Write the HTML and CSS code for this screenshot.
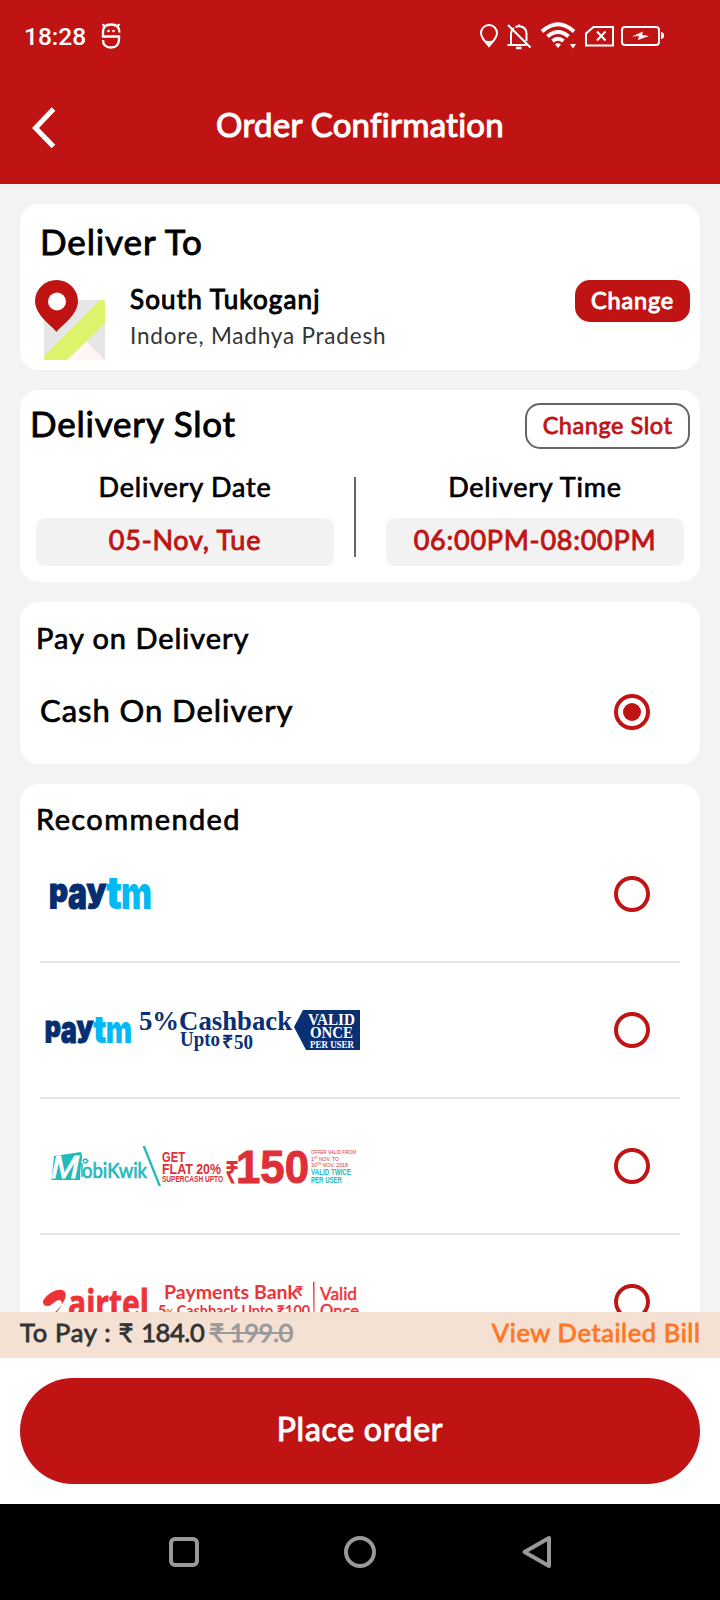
FILE: index.html
```html
<!DOCTYPE html>
<html lang="en">
<head>
<meta charset="utf-8">
<title>Order Confirmation</title>
<link rel="stylesheet" href="styles.css">
</head>
<body>
<div class="screen">
  <header class="header">
    <div class="status">
      <span class="clock">18:28</span>
      <svg class="face" width="20" height="28" viewBox="0 0 20 28" fill="none" stroke="#fff" stroke-width="2.300">
        <path d="M18.500 10.500C18.500 5 15 2.500 10 2.500S2 5 2 10v4.500h16V17c0 6-3 8.500-8 8.500S2 23 2 18M3.500 5 2 2M16.500 5 18 2"/>
        <circle cx="7.500" cy="9" r="1.300" fill="#fff" stroke="none"/><circle cx="12.500" cy="9" r="1.300" fill="#fff" stroke="none"/>
      </svg>
      <svg class="indicators" width="186" height="30" viewBox="0 0 186 30" fill="none" stroke="#fff" stroke-width="2">
        <path d="M9 24C6 20 1 16.500 1 11a8 8 0 0 1 16 0c0 5.500-5 9-8 13z"/>
        <path d="M2.500 17.500Q9 20.500 15.500 17.500L9 25z" fill="#fff" stroke="none"/>
        <path d="M28 3 50.500 25.500M27.500 23h19M31 22v-10q0-4 3-6M35.500 5q3-1.500 7 0 4 2 4 7v7M39 5V2.500"/>
        <path d="M36 26h5.500" stroke-width="2.500"/>
        <path d="M62 9.500Q78-5 94 9.500M67.500 14.500q10.500-9 21 0M72.500 19q5.500-4.500 11 0" stroke-width="3.800"/>
        <path d="M75 22.500q3-2.500 6 0l-3 3.500zM90 22h6l-3 4.500z" fill="#fff" stroke="none"/>
        <path d="M113.500 5H133v18.500h-27V11.500zM117 9.500l8.500 9M125.500 9.500l-8.500 9"/>
        <rect x="142" y="5" width="37" height="18" rx="3"/>
        <path d="M181 10q3 0 3 3.500t-3 3.500z" fill="#fff" stroke="none"/>
        <path d="M152 14.500 163 9.500l-1 3.500 7 1-11 4 1-4z" fill="#fff" stroke="none"/>
      </svg>
    </div>
    <div class="titlebar">
      <svg class="back" width="26" height="42" viewBox="0 0 26 42" fill="none" stroke="#fff" stroke-width="5"><path d="M23.500 2 5.500 21 23.500 39.500"/></svg>
      <h1 class="title">Order Confirmation</h1>
    </div>
  </header>

  <main class="content">
    <section class="card address">
      <h2 class="heading deliver">Deliver To</h2>
      <div class="address-row">
        <svg width="70" height="80" viewBox="0 0 70 80">
          <rect x="9" y="20" width="61" height="60" rx="2" fill="#e6e6e6"/>
          <path d="M51 61 69 79q-1 1-3 1H32z" fill="#fff5f3"/>
          <path d="M65 20h3q2 0 2 2v21L32 80H11q-2 0-2-2v-2z" fill="#dbf46b"/>
          <path d="M21.500 52C17 46 0 35 0 21a21.500 21 0 0 1 43 0c0 14-17 25-21.500 31z" fill="#c01414"/>
          <circle cx="22" cy="21.500" r="9" fill="#fff"/>
        </svg>
        <div class="place">
          <div class="area">South Tukoganj</div>
          <div class="city">Indore, Madhya Pradesh</div>
        </div>
        <button class="change">Change</button>
      </div>
    </section>

    <section class="card slot">
      <div class="slot-head">
        <h2 class="heading slot-title">Delivery Slot</h2>
        <button class="change-slot">Change Slot</button>
      </div>
      <div class="slot-cols">
        <div class="slot-col"><div class="slot-label">Delivery Date</div><div class="slot-value date">05-Nov, Tue</div></div>
        <div class="slot-divider"></div>
        <div class="slot-col"><div class="slot-label">Delivery Time</div><div class="slot-value time">06:00PM-08:00PM</div></div>
      </div>
    </section>

    <section class="card cod">
      <h3 class="subheading pod">Pay on Delivery</h3>
      <div class="cod-row"><span class="cod-label">Cash On Delivery</span><span class="radio checked"></span></div>
    </section>

    <section class="card methods">
      <h3 class="subheading rec">Recommended</h3>
      <div class="method first">
        <svg class="logo" width="330" height="40" viewBox="0 0 330 40">
          <g id="paytm" font-family="Inter, sans-serif" font-weight="900">
            <g fill="#042e6f" stroke="#042e6f" stroke-width="1">
              <text x="9" y="27.500" font-size="33" textLength="19" lengthAdjust="spacingAndGlyphs">p</text>
              <text x="28" y="34.500" font-size="45" textLength="19" lengthAdjust="spacingAndGlyphs">a</text>
              <text x="46.500" y="27.500" font-size="33" textLength="20" lengthAdjust="spacingAndGlyphs">y</text>
            </g>
            <g fill="#00b9f5">
              <text x="66" y="35" font-size="46" textLength="16" lengthAdjust="spacingAndGlyphs">t</text>
              <text x="81" y="35" font-size="46" textLength="31" lengthAdjust="spacingAndGlyphs">m</text>
            </g>
          </g>
        </svg>
        <span class="radio"></span>
      </div>
      <div class="method">
        <svg class="logo" width="330" height="40" viewBox="0 0 330 40" font-family="Liberation Serif, serif" font-weight="700" fill="#0b2f73">
          <use href="#paytm" transform="translate(-3 3.500) scale(.85)"/>
          <text x="99" y="20" font-size="27" textLength="153" lengthAdjust="spacingAndGlyphs">5%Cashback</text>
          <text x="140" y="36" font-size="20" textLength="40" lengthAdjust="spacingAndGlyphs">Upto</text>
          <text x="182" y="38" font-size="18" textLength="11" lengthAdjust="spacingAndGlyphs">₹</text>
          <text x="194" y="39" font-size="21" textLength="19" lengthAdjust="spacingAndGlyphs">50</text>
          <path d="M254 17 263 0h57v40h-54z"/>
          <g fill="#fff">
            <text x="268" y="15" font-size="16" textLength="47" lengthAdjust="spacingAndGlyphs">VALID</text>
            <text x="270" y="28" font-size="16" textLength="43" lengthAdjust="spacingAndGlyphs">ONCE</text>
            <text x="270" y="37.500" font-size="9.500" textLength="44" lengthAdjust="spacingAndGlyphs">PER USER</text>
          </g>
        </svg>
        <span class="radio"></span>
      </div>
      <div class="method">
        <svg class="logo" width="330" height="40" viewBox="0 0 330 40" font-family="Liberation Sans, sans-serif" font-weight="700" fill="#dd3038">
          <g fill="#21bab9">
            <path d="M14 10 41 6l-1 28H11.500z"/>
            <path d="M41 8q1-1 1 0v4l-3 20h-2z"/>
            <text x="42" y="32" font-family="Lato, sans-serif" font-weight="400" font-size="22" stroke="#21bab9" stroke-width=".7" textLength="65" lengthAdjust="spacingAndGlyphs">obiKwik</text>
            <path d="M102.500 0h2.500L121 40h-2.500z"/>
            <path d="M42 31V17M43 15q2-4 5 0-3 4-5 0z" fill="none" stroke="#21bab9" stroke-width="1.500"/>
          </g>
          <text x="11" y="32" font-size="32" font-style="italic" font-weight="400" fill="#fff" stroke="#fff" textLength="28" lengthAdjust="spacingAndGlyphs">M</text>
          <text x="122" y="15.500" font-size="15.500" textLength="23" lengthAdjust="spacingAndGlyphs">GET</text>
          <text x="122" y="28" font-size="15.500" textLength="59" lengthAdjust="spacingAndGlyphs">FLAT 20%</text>
          <text x="122" y="36" font-size="8.500" textLength="61" lengthAdjust="spacingAndGlyphs">SUPERCASH UPTO</text>
          <text x="185" y="37" font-size="30" textLength="14" lengthAdjust="spacingAndGlyphs">₹</text>
          <text x="196" y="36.500" font-size="46" stroke="#dd3038" textLength="73" lengthAdjust="spacingAndGlyphs">150</text>
          <g font-size="6" font-weight="400">
            <text x="271" y="8" textLength="45" lengthAdjust="spacingAndGlyphs">OFFER VALID FROM</text>
            <text x="271" y="14.500" textLength="28" lengthAdjust="spacingAndGlyphs">1<tspan font-size="3.500" dy="-2">ST</tspan><tspan dy="2"> NOV. TO</tspan></text>
            <text x="271" y="21" textLength="37" lengthAdjust="spacingAndGlyphs">30<tspan font-size="3.500" dy="-2">TH</tspan><tspan dy="2"> NOV. 2018</tspan></text>
          </g>
          <g font-size="8.500" fill="#21bab9">
            <text x="271" y="28.500" textLength="40" lengthAdjust="spacingAndGlyphs">VALID TWICE</text>
            <text x="271" y="36.500" textLength="31" lengthAdjust="spacingAndGlyphs">PER USER</text>
          </g>
        </svg>
        <span class="radio"></span>
      </div>
      <div class="method">
        <svg class="logo" width="330" height="40" viewBox="0 0 330 40" font-family="Lato, sans-serif" font-weight="700" fill="#ee3338">
          <path d="M9 34q8-2 11-8c3-5 2-8-1-8-4 0-7 6-11 6-6 0-6-5-3-8C10 10 17 7 22 8c6 2 4 9 0 14-3 5-7 9-13 12z"/>
          <text x="28" y="35" font-size="37" font-family="Open Sans, sans-serif" stroke="#ee3338" stroke-width=".8" textLength="81" lengthAdjust="spacingAndGlyphs">airtel</text>
          <text x="124" y="17" font-size="19" textLength="134" lengthAdjust="spacingAndGlyphs">Payments Bank</text>
          <text x="255" y="14" font-size="14">₹</text>
          <path d="M273 0h1.500v34h-1z"/>
          <text x="280" y="18" font-size="18" font-weight="400" stroke="#ee3338" stroke-width=".5" textLength="37" lengthAdjust="spacingAndGlyphs">Valid</text>
          <text x="280" y="35" font-size="18" font-weight="400" stroke="#ee3338" stroke-width=".5" textLength="39" lengthAdjust="spacingAndGlyphs">Once</text>
          <text x="118" y="34" font-size="15" textLength="152" lengthAdjust="spacingAndGlyphs">5<tspan font-size="9">%</tspan> Cashback Upto ₹100</text>
        </svg>
        <span class="radio"></span>
      </div>
    </section>
  </main>

  <div class="bill">
    <span class="topay">To Pay : ₹ <span class="amount">184.0</span></span><s class="old">₹ 199.0</s>
    <span class="view">View Detailed Bill</span>
  </div>
  <div class="action"><button class="place-order">Place order</button></div>
  <nav class="nav">
    <svg width="720" height="96" viewBox="0 0 720 96" fill="none" stroke="#999" stroke-width="4" stroke-linejoin="round">
      <rect x="171" y="35" width="26" height="26" rx="4"/>
      <circle cx="360" cy="48" r="14"/>
      <path d="M549 34v28L524.500 48z"/>
    </svg>
  </nav>
</div>
</body>
</html>
```
FILE: styles.css
```css
* { box-sizing: border-box; margin: 0; padding: 0; }
body { font-family: Lato, "DejaVu Sans", sans-serif; color: #000; background: #f3f3f3; -webkit-text-stroke: 0.7px; }
svg { display: block; flex: none; -webkit-text-stroke: 0; }
button { border: 0; font: inherit; -webkit-text-stroke: inherit; white-space: nowrap; }
h1, h2, h3 { font-weight: 400; white-space: nowrap; }
.screen { width: 720px; height: 1600px; display: flex; flex-direction: column; overflow: hidden; }

.header { height: 184px; flex: none; background: #c01414; color: #fff; }
.status { height: 72px; padding: 22px 0 0 24px; display: flex; }
.clock { font: 500 24.5px/30px Roboto, sans-serif; width: 77px; -webkit-text-stroke: 0; white-space: nowrap; }
.indicators { margin-left: 359px; }
.titlebar { display: flex; height: 112px; padding: 35px 30px 0; }
.title { flex: 1; margin-right: 26px; text-align: center; font-size: 33px; line-height: 34px; letter-spacing: 0.25px; -webkit-text-stroke: 1.1px; }

.content { height: 1128px; flex: none; padding: 20px; display: flex; flex-direction: column; gap: 20px; overflow: hidden; }
.card { background: #fff; border-radius: 19px; flex: none; }
.heading { font-size: 35px; line-height: 42px; letter-spacing: 0.9px; -webkit-text-stroke: 0.9px; }

.address { height: 166px; padding: 16px 10px 0 15px; }
.deliver { padding-left: 5px; }
.address-row { display: flex; align-items: flex-start; margin-top: 18px; }
.place { flex: 1; padding: 3px 0 0 25px; }
.area { font-size: 26px; line-height: 32px; letter-spacing: 1.15px; -webkit-text-stroke: 1px; }
.city { margin-top: 6px; font-size: 22.5px; line-height: 30px; letter-spacing: 0.8px; color: #333; -webkit-text-stroke: 0; }
.change { width: 115px; height: 42px; padding-bottom: 3px; border-radius: 15px; background: #c01414; color: #fff; font-size: 23.5px; letter-spacing: 0.8px; -webkit-text-stroke: 1px; }

.slot { height: 192px; padding: 13px 10px 0; }
.slot-head { display: flex; justify-content: space-between; align-items: flex-start; }
.slot-title { line-height: 40px; letter-spacing: 0.8px; }
.change-slot { width: 165px; height: 46px; padding-bottom: 3px; border: 2px solid #666; border-radius: 15px; background: #fff; color: #c01414; font-size: 23.5px; letter-spacing: 0.55px; -webkit-text-stroke: 0.8px; }
.slot-cols { display: flex; padding: 0 6px; margin-top: 21px; }
.slot-col { width: 298px; text-align: center; }
.slot-label { font-size: 27px; line-height: 34px; letter-spacing: 0.8px; }
.slot-value { height: 48px; margin-top: 14px; border-radius: 9px; background: #f2f2f2; color: #c01414; font-size: 27px; line-height: 44px; letter-spacing: 0.75px; -webkit-text-stroke: 0.9px; }
.slot-divider { width: 2px; height: 80px; margin: 7px 30px 0 20px; background: #666; }

.subheading { font-size: 29px; line-height: 36px; letter-spacing: 0.95px; }
.cod { height: 162px; padding: 18px 50px 0 16px; }
.cod-row { display: flex; justify-content: space-between; margin-top: 38px; padding-left: 4px; }
.cod-label { font-size: 31px; line-height: 32px; letter-spacing: 0.95px; }
.radio { width: 36px; height: 36px; flex: none; border: 4px solid #c01414; border-radius: 50%; display: grid; place-items: center; }
.checked::after { content: ""; width: 18px; height: 18px; border-radius: 50%; background: #c01414; }

.methods { height: 700px; padding: 17px 20px 0; }
.rec { margin-left: -4px; letter-spacing: 1.4px; }
.method { height: 136px; padding: 49px 30px 0 0; display: flex; justify-content: space-between; border-bottom: 2px solid #e6e6e6; }
.method.first { height: 126px; padding-top: 39px; }
.logo { margin-top: -2px; overflow: visible; }

.bill { height: 46px; flex: none; padding: 0 20px; display: flex; background: #f5e1d3; font-size: 25.500px; line-height: 41px; white-space: nowrap; -webkit-text-stroke: 0.8px; }
.topay { color: #333; letter-spacing: 0.7px; }
.amount { letter-spacing: -0.4px; }
.old { color: #999; margin-left: 5px; letter-spacing: -0.4px; }
.view { color: #ff7722; margin: 0 -0.6px 0 auto; letter-spacing: 0.6px; }
.action { height: 146px; flex: none; padding: 20px; background: #fff; }
.place-order { width: 680px; height: 106px; padding-bottom: 6px; border-radius: 53px; background: #c01414; color: #fff; font-size: 32px; letter-spacing: 0.75px; -webkit-text-stroke: 1px; }
.nav { height: 96px; flex: none; background: #000; }
```
